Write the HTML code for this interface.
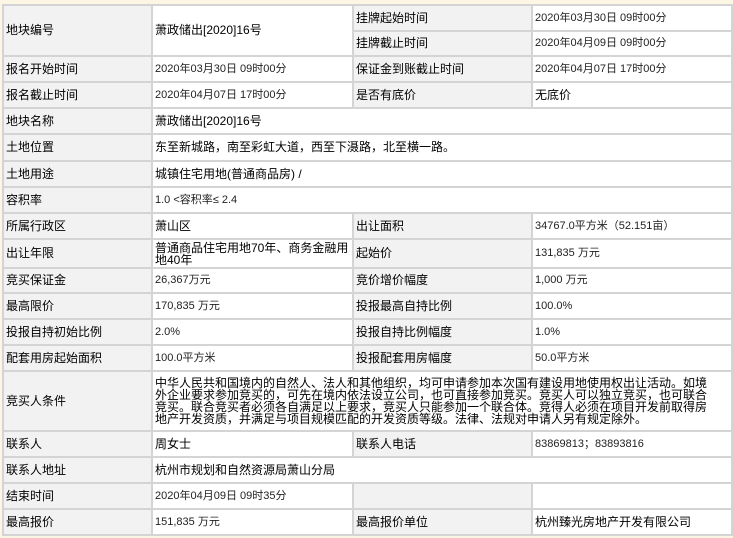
<!DOCTYPE html>
<html><head><meta charset="utf-8"><style>
html,body{margin:0;padding:0;background:#fdf6e4;width:733px;height:538px;overflow:hidden}
table{position:absolute;left:2px;top:4px;width:729px;border-collapse:collapse;table-layout:fixed;font-family:"Liberation Sans","Noto Sans CJK SC",sans-serif;font-size:12px;color:#000}
td{border:2px solid #d4d4d4;padding:0 0 0 2px;background:#fff;line-height:13px;vertical-align:middle;overflow:hidden}
td.l{background:#f2f2f2}
.s{font-size:11px;color:#222}
</style></head><body>
<table>
<colgroup><col style="width:149px"><col style="width:201px"><col style="width:179px"><col style="width:200px"></colgroup>
<tr style="height:26px"><td class="l" rowspan="2">地块编号</td><td rowspan="2">萧政储出[2020]16号</td><td class="l">挂牌起始时间</td><td class="s">2020年03月30日 09时00分</td></tr>
<tr style="height:25px"><td class="l">挂牌截止时间</td><td class="s">2020年04月09日 09时00分</td></tr>
<tr style="height:26px"><td class="l">报名开始时间</td><td class="s">2020年03月30日 09时00分</td><td class="l">保证金到账截止时间</td><td class="s">2020年04月07日 17时00分</td></tr>
<tr style="height:26px"><td class="l">报名截止时间</td><td class="s">2020年04月07日 17时00分</td><td class="l">是否有底价</td><td>无底价</td></tr>
<tr style="height:26px"><td class="l">地块名称</td><td colspan="3">萧政储出[2020]16号</td></tr>
<tr style="height:27px"><td class="l">土地位置</td><td colspan="3">东至新城路，南至彩虹大道，西至下滠路，北至横一路。</td></tr>
<tr style="height:26px"><td class="l">土地用途</td><td colspan="3">城镇住宅用地(普通商品房) /</td></tr>
<tr style="height:26px"><td class="l">容积率</td><td colspan="3" class="s">1.0 &lt;容积率≤ 2.4</td></tr>
<tr style="height:26px"><td class="l">所属行政区</td><td>萧山区</td><td class="l">出让面积</td><td class="s">34767.0平方米（52.151亩）</td></tr>
<tr style="height:29px"><td class="l">出让年限</td><td style="line-height:12px">普通商品住宅用地70年、商务金融用地40年</td><td class="l">起始价</td><td class="s">131,835 万元</td></tr>
<tr style="height:25px"><td class="l">竞买保证金</td><td class="s">26,367万元</td><td class="l">竞价增价幅度</td><td class="s">1,000 万元</td></tr>
<tr style="height:26px"><td class="l">最高限价</td><td class="s">170,835 万元</td><td class="l">投报最高自持比例</td><td class="s">100.0%</td></tr>
<tr style="height:26px"><td class="l">投报自持初始比例</td><td class="s">2.0%</td><td class="l">投报自持比例幅度</td><td class="s">1.0%</td></tr>
<tr style="height:26px"><td class="l">配套用房起始面积</td><td class="s">100.0平方米</td><td class="l">投报配套用房幅度</td><td class="s">50.0平方米</td></tr>
<tr style="height:60px"><td class="l">竞买人条件</td><td colspan="3" style="line-height:12px;padding-right:14px">中华人民共和国境内的自然人、法人和其他组织，均可申请参加本次国有建设用地使用权出让活动。如境<br>外企业要求参加竞买的，可先在境内依法设立公司，也可直接参加竞买。竞买人可以独立竞买，也可联合<br>竞买。联合竞买者必须各自满足以上要求，竞买人只能参加一个联合体。竞得人必须在项目开发前取得房<br>地产开发资质，并满足与项目规模匹配的开发资质等级。法律、法规对申请人另有规定除外。</td></tr>
<tr style="height:26px"><td class="l">联系人</td><td>周女士</td><td class="l">联系人电话</td><td class="s">83869813；83893816</td></tr>
<tr style="height:26px"><td class="l">联系人地址</td><td colspan="3">杭州市规划和自然资源局萧山分局</td></tr>
<tr style="height:26px"><td class="l">结束时间</td><td class="s">2020年04月09日 09时35分</td><td class="l"></td><td></td></tr>
<tr style="height:26px"><td class="l">最高报价</td><td class="s">151,835 万元</td><td class="l">最高报价单位</td><td>杭州臻光房地产开发有限公司</td></tr>
</table>
</body></html>
